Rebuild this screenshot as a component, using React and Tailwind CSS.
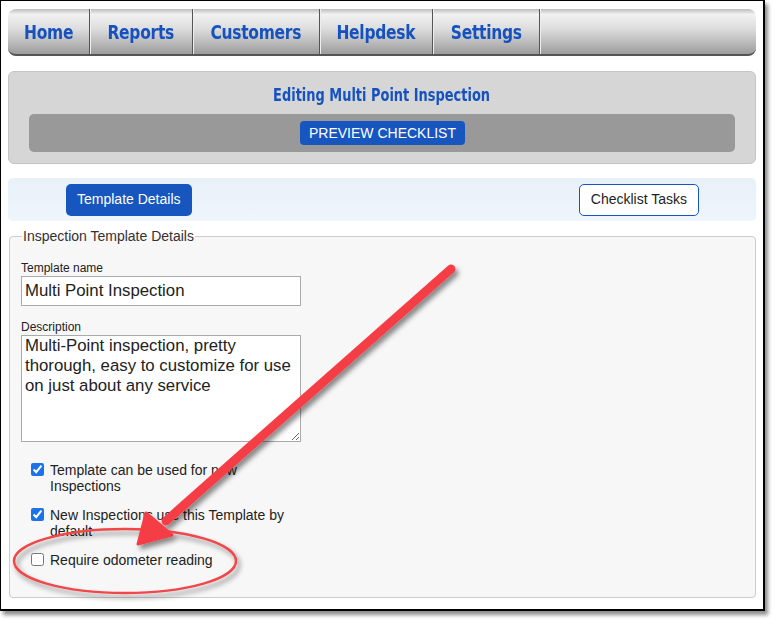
import { useState } from "react";

const navItems = [
  { label: "Home", w: "w-[82px]" },
  { label: "Reports", w: "w-[103px]" },
  { label: "Customers", w: "w-[127px]" },
  { label: "Helpdesk", w: "w-[113px]" },
  { label: "Settings", w: "w-[107px]" },
];

const condensed = "font-['DejaVu_Sans_Condensed','Liberation_Sans',sans-serif]";

function Check({ checked, onChange, children }) {
  return (
    <label className="flex items-start gap-[6px] pl-[10px] text-[14px] leading-[16px] text-[#222]">
      <input
        type="checkbox"
        checked={checked}
        onChange={onChange}
        className="mt-[1px] h-[13px] w-[13px] shrink-0 accent-[#1a73e8]"
      />
      <span className="w-[250px]">{children}</span>
    </label>
  );
}

export default function App() {
  const [name, setName] = useState("Multi Point Inspection");
  const [desc, setDesc] = useState(
    "Multi-Point inspection, pretty thorough, easy to customize for use on just about any service"
  );
  const [canUse, setCanUse] = useState(true);
  const [byDefault, setByDefault] = useState(true);
  const [odometer, setOdometer] = useState(false);

  return (
    <div className="min-h-screen bg-white font-['Liberation_Sans',Arial,sans-serif]">
      <div className="relative h-[611px] w-[765px] border-l border-t border-r-2 border-b-2 border-black bg-white shadow-[3px_4px_4px_rgba(0,0,0,0.45)]">
        <div className="flex flex-col px-[7px] pt-[8px]">
          {/* top nav */}
          <nav className="flex h-[47px] overflow-hidden rounded-[8px] border-b-2 border-[#555] bg-[linear-gradient(#bdbdbd_0%,#f2f2f2_12%,#dcdcdc_45%,#b4b4b4_80%,#9c9c9c_100%)]">
            {navItems.map((item) => (
              <a
                key={item.label}
                href="#"
                className={`${item.w} flex items-center justify-center border-r border-r-[#555] shadow-[1px_0_0_#eee] ${condensed} text-[20px] font-bold tracking-[-0.3px] text-[#1552c0]`}
              >
                <span className="inline-block scale-x-[0.86]">{item.label}</span>
              </a>
            ))}
          </nav>

          {/* header panel */}
          <section className="mt-[15px] flex h-[93px] flex-col items-center rounded-[6px] border border-[#c4c4c4] bg-[#d6d6d6] px-[20px]">
            <h1 className={`mt-[13px] ${condensed} text-[18px] font-bold leading-[20px] text-[#1552c0]`}>
              <span className="inline-block scale-x-[0.8]">Editing Multi Point Inspection</span>
            </h1>
            <div className="mt-[9px] flex h-[38px] w-full items-center justify-center rounded-[5px] bg-[#999999]">
              <button className="ml-[1px] h-[24px] rounded-[4px] bg-[#1756bf] px-[9px] text-[14px] text-white">
                PREVIEW CHECKLIST
              </button>
            </div>
          </section>

          {/* tabs */}
          <div className="mt-[14px] flex h-[43px] items-center justify-between rounded-[5px] bg-[linear-gradient(#e8f0f8,#eef5fd)] pl-[58px] pr-[57px]">
            <button className="h-[32px] rounded-[5px] bg-[#1756bf] px-[11px] text-[14px] text-white">
              Template Details
            </button>
            <button className="h-[32px] rounded-[5px] border border-[#1756bf] bg-white px-[11px] text-[14px] text-[#222]">
              Checklist Tasks
            </button>
          </div>

          {/* fieldset */}
          <fieldset className="mt-[7px] ml-[1px] h-[370px] rounded-[4px] border border-[#cccccc] bg-[#f7f7f7] px-[11px] pb-[10px]">
            <legend className="ml-[1px] px-[1px] text-[14px] leading-[16px] text-[#333]">
              Inspection Template Details
            </legend>

            <label className="mt-[17px] block text-[12px] leading-[14px] text-[#222]">Template name</label>
            <input
              value={name}
              onChange={(e) => setName(e.target.value)}
              className="mt-[1px] h-[30px] w-[280px] border border-[#aaa] bg-white px-[3px] text-[16.8px] text-[#222] outline-none"
            />

            <label className="mt-[14px] block text-[12px] leading-[14px] text-[#222]">Description</label>
            <textarea
              value={desc}
              onChange={(e) => setDesc(e.target.value)}
              className="mt-[1px] block h-[107px] w-[280px] resize border border-[#aaa] bg-white px-[3px] py-0 text-[16.8px] leading-[20px] text-[#222] outline-none"
            />

            <div className="mt-[20px] flex flex-col gap-[13px]">
              <Check checked={canUse} onChange={() => setCanUse(!canUse)}>
                Template can be used for new Inspections
              </Check>
              <Check checked={byDefault} onChange={() => setByDefault(!byDefault)}>
                New Inspections use this Template by default
              </Check>
              <Check checked={odometer} onChange={() => setOdometer(!odometer)}>
                Require odometer reading
              </Check>
            </div>
          </fieldset>
        </div>

        {/* callout annotation drawn on top */}
        <svg className="pointer-events-none absolute left-0 top-0" width="765" height="611" viewBox="0 0 765 611">
          <defs>
            <filter id="sh" x="-20%" y="-20%" width="140%" height="140%">
              <feDropShadow dx="3" dy="4" stdDeviation="2.5" floodColor="#000" floodOpacity="0.45" />
            </filter>
          </defs>
          <g filter="url(#sh)">
            <ellipse cx="124" cy="560" rx="111" ry="32" fill="none" stroke="#f0474c" strokeWidth="2.5" />
            <line x1="450" y1="268" x2="165" y2="520" stroke="#f53e45" strokeWidth="9" strokeLinecap="round" />
            <polygon points="137,543 145,512 171,534" fill="#f53e45" stroke="#f53e45" strokeWidth="3" strokeLinejoin="round" />
          </g>
        </svg>
      </div>
    </div>
  );
}
